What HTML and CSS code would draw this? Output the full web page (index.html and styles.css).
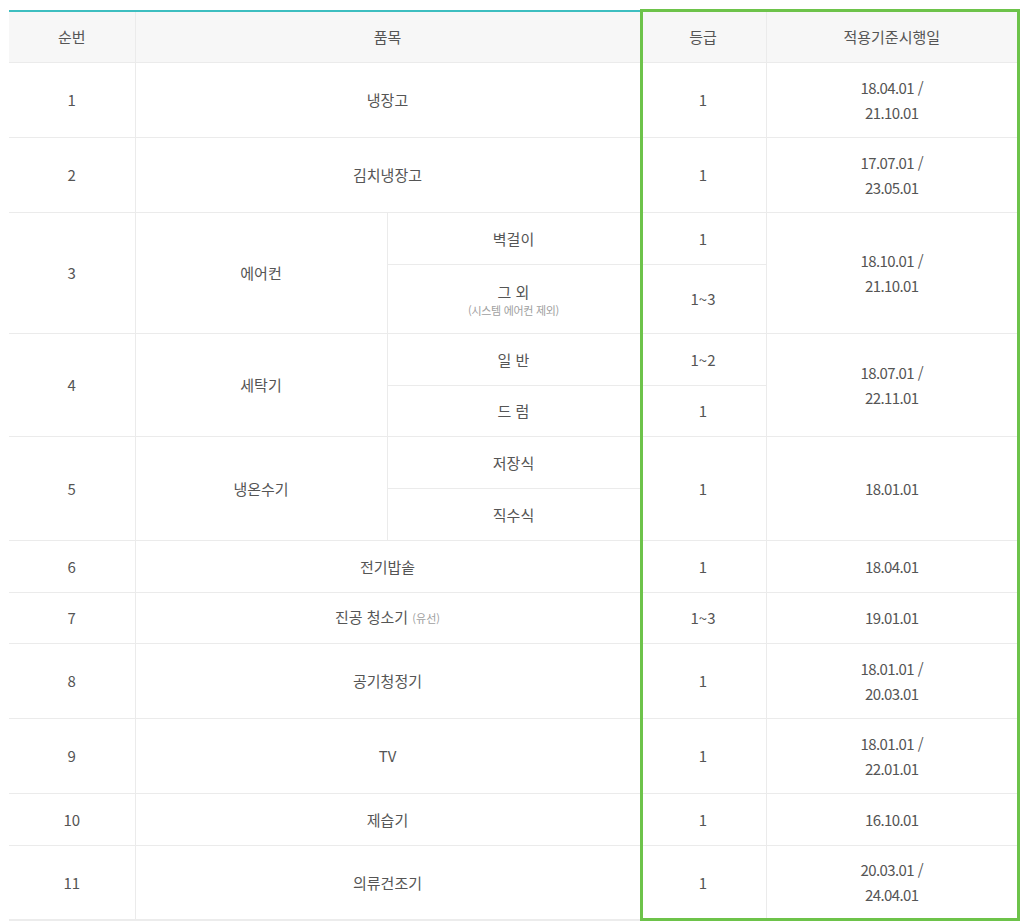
FILE: index.html
```html
<!DOCTYPE html>
<html lang="ko">
<head>
<meta charset="utf-8">
<link rel="stylesheet" href="styles.css">
</head>
<body>
<div class="wrap">
  <table class="grade">
    <colgroup>
      <col class="c1"><col class="c2"><col class="c2b"><col class="c3"><col class="c4">
    </colgroup>
    <thead>
      <tr class="h-head"><th>순번</th><th colspan="2">품목</th><th>등급</th><th>적용기준시행일</th></tr>
    </thead>
    <tbody>
      <tr class="h75"><td>1</td><td colspan="2">냉장고</td><td>1</td><td class="date">18.04.01 /<br>21.10.01</td></tr>
      <tr class="h75"><td>2</td><td colspan="2">김치냉장고</td><td>1</td><td class="date">17.07.01 /<br>23.05.01</td></tr>
      <tr class="h52"><td rowspan="2">3</td><td rowspan="2">에어컨</td><td>벽걸이</td><td>1</td><td rowspan="2" class="date">18.10.01 /<br>21.10.01</td></tr>
      <tr class="h69"><td class="two">그 외<span class="note">(시스템 에어컨 제외)</span></td><td>1~3</td></tr>
      <tr class="h52"><td rowspan="2">4</td><td rowspan="2">세탁기</td><td>일 반</td><td>1~2</td><td rowspan="2" class="date">18.07.01 /<br>22.11.01</td></tr>
      <tr class="h51"><td>드 럼</td><td>1</td></tr>
      <tr class="h52"><td rowspan="2">5</td><td rowspan="2">냉온수기</td><td>저장식</td><td rowspan="2">1</td><td rowspan="2" class="date">18.01.01</td></tr>
      <tr class="h52"><td>직수식</td></tr>
      <tr class="h52"><td>6</td><td colspan="2">전기밥솥</td><td>1</td><td class="date">18.04.01</td></tr>
      <tr class="h51"><td>7</td><td colspan="2">진공 청소기 <span class="inote">(유선)</span></td><td>1~3</td><td class="date">19.01.01</td></tr>
      <tr class="h75"><td>8</td><td colspan="2">공기청정기</td><td>1</td><td class="date">18.01.01 /<br>20.03.01</td></tr>
      <tr class="h75"><td>9</td><td colspan="2">TV</td><td>1</td><td class="date">18.01.01 /<br>22.01.01</td></tr>
      <tr class="h52"><td>10</td><td colspan="2">제습기</td><td>1</td><td class="date">16.10.01</td></tr>
      <tr class="h75 last"><td>11</td><td colspan="2">의류건조기</td><td>1</td><td class="date">20.03.01 /<br>24.04.01</td></tr>
    </tbody>
  </table>
  <div class="highlight"></div>
</div>
</body>
</html>
```
FILE: styles.css
```css
html, body {
  margin: 0;
  padding: 0;
  background: #fff;
}
body {
  font-family: "Noto Sans CJK KR", "Noto Sans", sans-serif;
  color: #555;
  font-size: 15px;
}
.wrap {
  position: relative;
  padding: 10px 0 0 9px;
  width: 1015px;
}
.grade {
  width: 1008px;
  border-collapse: collapse;
  table-layout: fixed;
  border-top: 2px solid #3dbec0;
  border-bottom: 2px solid #ececec;
}
.c1 { width: 126px; }
.c2 { width: 252px; }
.c2b { width: 253px; }
.c3 { width: 126px; }
.c4 { width: 251px; }
th, td {
  border: 1px solid #ebebeb;
  text-align: center;
  vertical-align: middle;
  padding: 0;
  font-weight: 400;
  line-height: 25px;
}
tr > :first-child { border-left: none; }
tr > :last-child { border-right: none; }
th {
  background: #f7f7f7;
  color: #555;
}
.h-head { height: 51px; }
.h75 { height: 75px; }
.h52 { height: 52px; }
.h51 { height: 51px; }
.h69 { height: 69px; }
.date {
  letter-spacing: -0.6px;
}
.two {
  line-height: 20px;
  padding-top: 2px;
}
.note {
  display: block;
  font-size: 11px;
  line-height: 16px;
  color: #a0a0a0;
  letter-spacing: -0.3px;
}
.inote {
  font-size: 11px;
  color: #a0a0a0;
}
.highlight {
  position: absolute;
  left: 640px;
  top: 9px;
  width: 374px;
  height: 906px;
  border: 3px solid #6dc34a;
  pointer-events: none;
}
```
